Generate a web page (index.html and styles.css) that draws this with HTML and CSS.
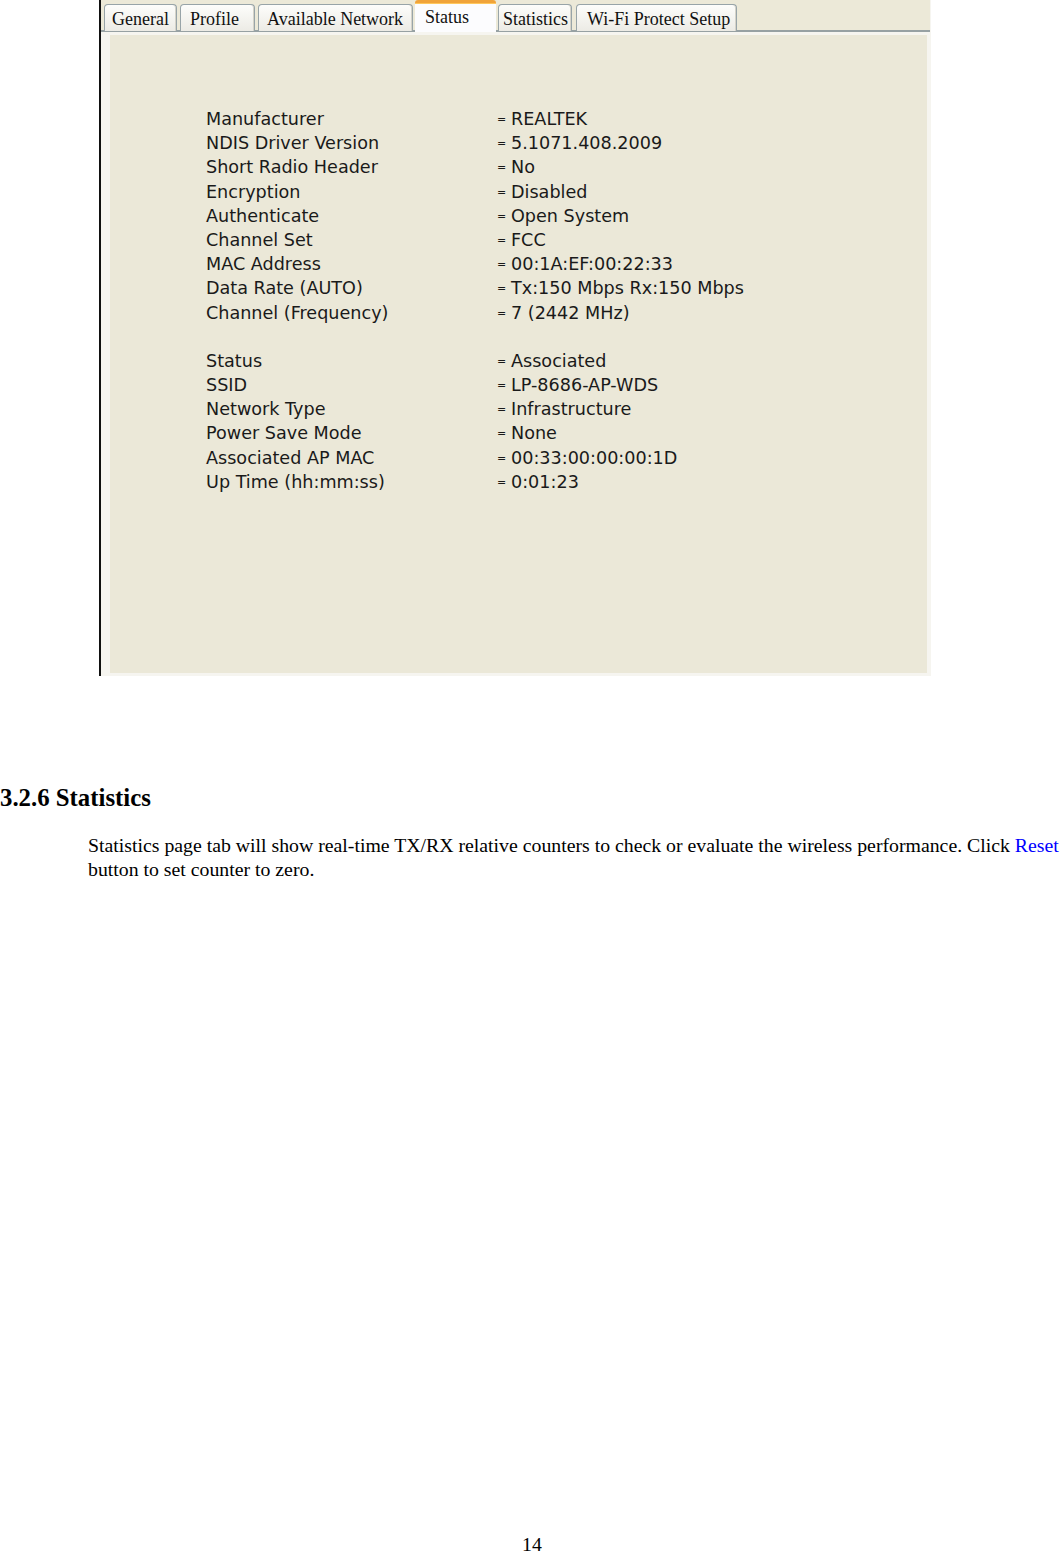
FILE: index.html
```html
<!DOCTYPE html>
<html>
<head>
<meta charset="utf-8">
<link rel="stylesheet" href="styles.css">
</head>
<body>
<div class="shot">
  <div class="tabbar">
    <div class="tab t-general">General</div>
    <div class="tab t-profile">Profile</div>
    <div class="tab t-avail">Available Network</div>
    <div class="tab t-status active">Status</div>
    <div class="tab t-stats">Statistics</div>
    <div class="tab t-wps">Wi-Fi Protect Setup</div>
  </div>
  <div class="panel">
    <div class="inner">
      <div class="grid">
        <div class="lbl">Manufacturer</div><div class="val"><span class="eq">=</span>REALTEK</div>
        <div class="lbl">NDIS Driver Version</div><div class="val"><span class="eq">=</span>5.1071.408.2009</div>
        <div class="lbl">Short Radio Header</div><div class="val"><span class="eq">=</span>No</div>
        <div class="lbl">Encryption</div><div class="val"><span class="eq">=</span>Disabled</div>
        <div class="lbl">Authenticate</div><div class="val"><span class="eq">=</span>Open System</div>
        <div class="lbl">Channel Set</div><div class="val"><span class="eq">=</span>FCC</div>
        <div class="lbl">MAC Address</div><div class="val"><span class="eq">=</span>00:1A:EF:00:22:33</div>
        <div class="lbl">Data Rate (AUTO)</div><div class="val"><span class="eq">=</span>Tx:150 Mbps Rx:150 Mbps</div>
        <div class="lbl">Channel (Frequency)</div><div class="val"><span class="eq">=</span>7 (2442 MHz)</div>
        <div class="spacer"></div><div class="spacer"></div>
        <div class="lbl">Status</div><div class="val"><span class="eq">=</span>Associated</div>
        <div class="lbl">SSID</div><div class="val"><span class="eq">=</span>LP-8686-AP-WDS</div>
        <div class="lbl">Network Type</div><div class="val"><span class="eq">=</span>Infrastructure</div>
        <div class="lbl">Power Save Mode</div><div class="val"><span class="eq">=</span>None</div>
        <div class="lbl">Associated AP MAC</div><div class="val"><span class="eq">=</span>00:33:00:00:00:1D</div>
        <div class="lbl">Up Time (hh:mm:ss)</div><div class="val"><span class="eq">=</span>0:01:23</div>
      </div>
    </div>
  </div>
</div>

<h2 class="heading">3.2.6 Statistics</h2>
<p class="para"><span class="line">Statistics page tab will show real-time TX/RX relative counters to check or evaluate the wireless performance. Click <span class="link">Reset</span></span><br>button to set counter to zero.</p>

<div class="pagenum">14</div>
</body>
</html>
```

FILE: styles.css
```css
html, body {
  margin: 0;
  padding: 0;
  background: #fff;
}
body {
  width: 1060px;
  font-family: "Liberation Serif", "Times New Roman", serif;
  color: #000;
}
.shot {
  margin-left: 99px;
  width: 832px;
  height: 676px;
  border-left: 2px solid #111;
  display: flex;
  flex-direction: column;
  box-sizing: border-box;
  border-right: 1px solid #f6f5f0;
}
.tabbar {
  height: 32px;
  box-sizing: border-box;
  background: #ece9d8;
  border-bottom: 2px solid #97a1a3;
  display: flex;
  align-items: flex-end;
  padding-left: 3px;
  gap: 2px;
}
.tab {
  height: 27px;
  box-sizing: border-box;
  border: 1px solid #98a4a8;
  border-bottom: none;
  border-radius: 4px 4px 0 0;
  background: linear-gradient(#fdfdfb, #ecebe5);
  font-family: "Liberation Serif", "Times New Roman", serif;
  font-size: 18px;
  line-height: 28px;
  color: #111;
  white-space: nowrap;
  margin-bottom: -1px;
  box-shadow: inset -1px 0 0 #d5d3c9;
}
.t-general { width: 73px; padding-left: 7px; }
.t-profile { width: 75px; padding-left: 9px; margin-left: 1px; }
.t-avail { width: 155px; padding-left: 8px; margin-left: 1px; }
.t-status {
  width: 81px;
  padding-left: 10px;
  height: 32px;
  margin-bottom: -2px;
  line-height: 28px;
  background: #fcfcfe;
  border: none;
  border-top: 3px solid #f0a33a;
  border-radius: 3px 3px 0 0;
  box-shadow: inset 0 1px 0 #ffc75c;
}
.t-stats { width: 74px; padding-left: 4px; }
.t-wps { width: 161px; padding-left: 10px; margin-left: 2px; }
.panel {
  flex: 1;
  background: #f6f5f0;
  padding: 3px 3px 3px 9px;
  display: flex;
}
.inner {
  flex: 1;
  background: #ebe8d8;
  padding: 72px 0 0 96px;
}
.grid {
  display: grid;
  grid-template-columns: 291px auto;
  grid-auto-rows: 24.2px;
  font-family: "DejaVu Sans", Verdana, sans-serif;
  font-size: 17.6px;
  line-height: 24px;
  color: #1a1a1a;
  white-space: nowrap;
}
.eq {
  display: inline-block;
  width: 14px;
  font-size: 11px;
  vertical-align: 2px;
}
.heading {
  margin: 108px 0 0 0;
  font-size: 24.8px;
  line-height: 28px;
  font-weight: bold;
}
.para {
  margin: 21px 0 0 88px;
  font-size: 19.8px;
  line-height: 24px;
}
.line {
  white-space: nowrap;
}
.link {
  color: #0000ff;
}
.pagenum {
  margin-top: 656px;
  text-align: center;
  font-size: 19.8px;
  line-height: 14px;
  padding-left: 4px;
}
```
